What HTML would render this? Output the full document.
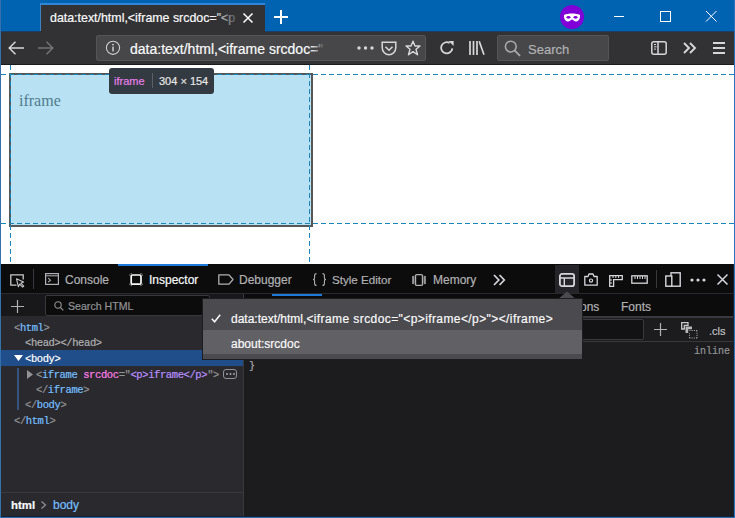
<!DOCTYPE html>
<html><head><meta charset="utf-8">
<style>
*{margin:0;padding:0;box-sizing:border-box}
html,body{width:735px;height:518px;overflow:hidden;background:#fff}
body{position:relative;font-family:"Liberation Sans",sans-serif;font-size:12px;-webkit-text-stroke:0.2px}
.a{position:absolute}
.mono{font-family:"Liberation Mono",monospace}
.mk div{white-space:pre;height:15.65px;position:absolute}
svg{position:absolute;overflow:visible}
</style></head><body>

<!-- title bar -->
<div class="a" style="left:0;top:0;width:735px;height:31px;background:#0063b1"></div>
<div class="a" style="left:40px;top:3px;width:225px;height:28px;background:#323234;border-top:2px solid #2f86d8;border-left:1px solid #3d82c4"></div>
<div class="a" style="left:50px;top:10px;width:190px;height:16px;color:#f9f9fa;white-space:nowrap;overflow:hidden;line-height:16px;font-size:12.4px">data:text/html,&lt;iframe srcdoc="&lt;p</div>
<div class="a" style="left:212px;top:5px;width:28px;height:26px;background:linear-gradient(to right,rgba(50,50,52,0),rgba(50,50,52,.75) 80%,#323234)"></div>
<svg style="left:243px;top:13px" width="10" height="10"><path d="M0.5 0.5L9.5 9.5M9.5 0.5L0.5 9.5" stroke="#f9f9fa" stroke-width="1.6"/></svg>
<svg style="left:274px;top:10px" width="14" height="14"><path d="M7 0V14M0 7H14" stroke="#fff" stroke-width="2"/></svg>
<div class="a" style="left:560px;top:5px;width:24px;height:24px;border-radius:50%;background:#8000d7"></div>
<svg style="left:563px;top:13px" width="18" height="10"><path d="M1 2C5 0 13 0 17 2C17.5 6 15 9 12.5 8.5C11 8.2 10 6.5 9 6.5C8 6.5 7 8.2 5.5 8.5C3 9 0.5 6 1 2Z" fill="#fff"/><ellipse cx="5.5" cy="4.3" rx="2" ry="1.4" fill="#8000d7"/><ellipse cx="12.5" cy="4.3" rx="2" ry="1.4" fill="#8000d7"/></svg>
<svg style="left:614px;top:16px" width="11" height="1"><path d="M0 0.5H10" stroke="#fff" stroke-width="1"/></svg>
<svg style="left:660px;top:11px" width="11" height="11"><rect x="0.5" y="0.5" width="10" height="10" fill="none" stroke="#fff" stroke-width="1"/></svg>
<svg style="left:706px;top:11px" width="11" height="11"><path d="M0 0L10.5 10.5M10.5 0L0 10.5" stroke="#fff" stroke-width="1"/></svg>

<!-- nav bar -->
<div class="a" style="left:0;top:31px;width:735px;height:34px;background:#323234;border-bottom:1px solid #1b1b1d"></div>
<div class="a" style="left:0;top:31px;width:40px;height:1px;background:#1a4068"></div>
<div class="a" style="left:265px;top:31px;width:470px;height:1px;background:#1a4068"></div>
<svg style="left:8px;top:41px" width="16" height="14"><path d="M1 7H16M7.5 0.8L1.2 7L7.5 13.2" stroke="#d7d7db" stroke-width="1.5" fill="none"/></svg>
<svg style="left:38px;top:41px" width="16" height="14"><path d="M0 7H15M8.5 0.8L14.8 7L8.5 13.2" stroke="#737375" stroke-width="1.5" fill="none"/></svg>
<div class="a" style="left:96px;top:35px;width:330px;height:26px;background:#474749;border:1px solid #545456;border-radius:2px"></div>
<svg style="left:105px;top:40px" width="16" height="16"><circle cx="8" cy="7.8" r="6.6" fill="none" stroke="#d0d0d3" stroke-width="1.1"/><rect x="7.25" y="6.6" width="1.5" height="4.8" fill="#d0d0d3"/><circle cx="8" cy="4.6" r="0.95" fill="#d0d0d3"/></svg>
<div class="a" style="left:130px;top:41px;width:222px;height:17px;color:#f9f9fa;white-space:nowrap;overflow:hidden;line-height:17px;font-size:14px">data:text/html,&lt;iframe srcdoc="</div>
<div class="a" style="left:310px;top:36px;width:44px;height:24px;background:linear-gradient(to right,rgba(71,71,73,0),rgba(71,71,73,.85) 30%,#474749 40%)"></div>
<svg style="left:357px;top:46px" width="17" height="4"><circle cx="2" cy="2" r="1.7" fill="#d7d7db"/><circle cx="8.5" cy="2" r="1.7" fill="#d7d7db"/><circle cx="15" cy="2" r="1.7" fill="#d7d7db"/></svg>
<svg style="left:381px;top:41px" width="16" height="15"><path d="M1.2 1.2H14.8V6.5C14.8 10.8 11.5 13.8 8 13.8C4.5 13.8 1.2 10.8 1.2 6.5Z" fill="none" stroke="#d7d7db" stroke-width="1.5"/><path d="M4.5 5.8L8 9.2L11.5 5.8" fill="none" stroke="#d7d7db" stroke-width="1.6"/></svg>
<svg style="left:405px;top:40px" width="16" height="16"><path d="M8 1.2L10 6H15L11 9.3L12.5 14.8L8 11.6L3.5 14.8L5 9.3L1 6H6Z" fill="none" stroke="#d7d7db" stroke-width="1.4" stroke-linejoin="round"/></svg>
<svg style="left:439px;top:40px" width="16" height="15"><path d="M13.3 8.3A5.6 5.6 0 1 1 10.6 3" fill="none" stroke="#d7d7db" stroke-width="1.8"/><path d="M9.6 1H14.6V6Z" fill="#d7d7db"/></svg>
<svg style="left:469px;top:41px" width="16" height="14"><path d="M1 0V14M4.5 0V14M8 0V14M10.2 0.3L15 13.7" stroke="#d7d7db" stroke-width="1.7"/></svg>
<div class="a" style="left:497px;top:35px;width:112px;height:26px;background:#474749;border:1px solid #545456;border-radius:2px"></div>
<svg style="left:504px;top:40px" width="18" height="17"><circle cx="6.8" cy="6.6" r="5.4" fill="none" stroke="#a8a8aa" stroke-width="1.6"/><path d="M10.6 10.4L16 15.8" stroke="#a8a8aa" stroke-width="1.9"/></svg>
<div class="a" style="left:528px;top:41px;color:#b1b1b3;line-height:17px;font-size:13px">Search</div>
<svg style="left:651px;top:41px" width="16" height="14"><rect x="0.8" y="0.8" width="14.4" height="12.4" rx="2" fill="none" stroke="#d7d7db" stroke-width="1.5"/><path d="M7 1V13" stroke="#d7d7db" stroke-width="1.5"/><path d="M3 3.5H5M3 5.8H5.5M3 8.1H5" stroke="#d7d7db" stroke-width="1"/></svg>
<svg style="left:683px;top:42px" width="14" height="12"><path d="M1 1L6 6L1 11M7 1L12 6L7 11" fill="none" stroke="#d7d7db" stroke-width="1.9"/></svg>
<svg style="left:713px;top:42px" width="12" height="12"><path d="M0 1H12M0 6H12M0 11H12" stroke="#d7d7db" stroke-width="1.8"/></svg>

<!-- content -->
<div class="a" style="left:1px;top:65px;width:733px;height:199px;background:#fff"></div>
<div class="a" style="left:9px;top:73px;width:304px;height:154px;background:#575757"></div>
<div class="a" style="left:11px;top:75px;width:300px;height:150px;background:#b8e2f3"></div>
<div class="a" style="left:19px;top:92px;font-family:'Liberation Serif',serif;font-size:16px;color:#517c8d;line-height:18px;-webkit-text-stroke:0">iframe</div>
<!-- guides -->
<div class="a" style="left:1px;top:74px;width:733px;height:1px;background:repeating-linear-gradient(to right,#1d86b8 0 5px,transparent 5px 8px)"></div>
<div class="a" style="left:1px;top:223px;width:733px;height:1px;background:repeating-linear-gradient(to right,#1d86b8 0 5px,transparent 5px 8px)"></div>
<div class="a" style="left:10px;top:65px;width:1px;height:199px;background:repeating-linear-gradient(to bottom,#1d86b8 0 5px,transparent 5px 8px)"></div>
<div class="a" style="left:309px;top:65px;width:1px;height:199px;background:repeating-linear-gradient(to bottom,#1d86b8 0 5px,transparent 5px 8px)"></div>
<!-- infobar -->
<div class="a" style="left:109px;top:68px;width:105px;height:26px;background:#343a41;border-radius:3px"></div>
<div class="a mono" style="left:114px;top:74px;color:#e57fea;font-size:11px;line-height:14px;font-family:'Liberation Sans',sans-serif">iframe</div>
<div class="a" style="left:152px;top:73px;width:1px;height:15px;background:#5b6068"></div>
<div class="a" style="left:159px;top:74px;color:#e6e6e6;font-size:11px;line-height:14px">304 × 154</div>

<!-- devtools toolbar -->
<div class="a" style="left:1px;top:264px;width:733px;height:29px;background:#0c0c0d"></div>
<div class="a" style="left:0;top:293px;width:735px;height:1px;background:#2a2a2e"></div>
<svg style="left:10px;top:274px" width="15" height="13"><path d="M6.5 11.2H0.8V0.8H13.2V5.5" fill="none" stroke="#c8c8ca" stroke-width="1.3"/><path d="M6.5 4.8L13.6 8L10.8 9.2L13.8 12.2L12.6 13.2L9.6 10.2L8.4 12.8Z" fill="none" stroke="#c8c8ca" stroke-width="1.1" stroke-linejoin="round"/></svg>
<div class="a" style="left:33px;top:269px;width:1px;height:20px;background:#38383d"></div>
<svg style="left:45px;top:273px" width="14" height="12"><rect x="0.6" y="0.6" width="12.8" height="10.8" fill="none" stroke="#b1b1b3" stroke-width="1.2"/><path d="M1 2.8H13" stroke="#b1b1b3" stroke-width="1"/><path d="M3.2 5.2L5.5 7.2L3.2 9.2" fill="none" stroke="#b1b1b3" stroke-width="1.1"/></svg>
<div class="a" style="left:65px;top:273px;color:#b1b1b3;line-height:14px">Console</div>
<div class="a" style="left:118px;top:264px;width:90px;height:2px;background:#1e7ada"></div>
<svg style="left:129px;top:273px" width="14" height="13"><rect x="2.2" y="2" width="9.8" height="9.2" rx="1.2" fill="none" stroke="#f9f9fa" stroke-width="1.7"/><path d="M0.3 2H1.3M12.9 2H13.9M0.3 11.2H1.3M12.9 11.2H13.9M2.2 0.1V1.1M12 0.1V1.1M2.2 12.1V13.1M12 12.1V13.1" stroke="#b0b0b2" stroke-width="1"/></svg>
<div class="a" style="left:149px;top:273px;color:#f9f9fa;line-height:14px">Inspector</div>
<svg style="left:218px;top:274px" width="16" height="11"><path d="M0.8 0.8H11L15 5.5L11 10.2H0.8Z" fill="none" stroke="#b1b1b3" stroke-width="1.3" stroke-linejoin="round"/></svg>
<div class="a" style="left:239px;top:273px;color:#b1b1b3;line-height:14px">Debugger</div>
<svg style="left:312px;top:273px" width="15" height="13"><path d="M4.5 0.6C2.8 0.6 2.6 1.2 2.6 2.6V5C2.6 6 2 6.5 1 6.5C2 6.5 2.6 7 2.6 8V10.4C2.6 11.8 2.8 12.4 4.5 12.4M10.5 0.6C12.2 0.6 12.4 1.2 12.4 2.6V5C12.4 6 13 6.5 14 6.5C13 6.5 12.4 7 12.4 8V10.4C12.4 11.8 12.2 12.4 10.5 12.4" fill="none" stroke="#b1b1b3" stroke-width="1.1"/></svg>
<div class="a" style="left:332px;top:273px;color:#b1b1b3;line-height:14px;font-size:11.6px">Style Editor</div>
<svg style="left:411px;top:274px" width="16" height="12"><rect x="4.6" y="0.6" width="6.8" height="10.8" rx="1" fill="none" stroke="#b1b1b3" stroke-width="1.2"/><path d="M3.5 2L1 3L3.5 4L1 5L3.5 6L1 7L3.5 8L1 9L3.5 10M12.5 2L15 3L12.5 4L15 5L12.5 6L15 7L12.5 8L15 9L12.5 10" fill="none" stroke="#b1b1b3" stroke-width="0.9"/></svg>
<div class="a" style="left:433px;top:273px;color:#b1b1b3;line-height:14px">Memory</div>
<svg style="left:493px;top:274px" width="13" height="12"><path d="M1 1L5.8 6L1 11M6.5 1L11.3 6L6.5 11" fill="none" stroke="#d7d7db" stroke-width="1.7"/></svg>
<div class="a" style="left:555px;top:265px;width:24px;height:28px;background:#252529"></div>
<svg style="left:559px;top:273px" width="16" height="14"><rect x="0.9" y="0.9" width="14.2" height="12.2" rx="2.2" fill="none" stroke="#d7d7db" stroke-width="1.8"/><path d="M1 5H15M5.3 5V13" stroke="#d7d7db" stroke-width="1.4"/></svg>
<svg style="left:584px;top:273px" width="14" height="13"><path d="M0.8 3.5H4L5 1H9L10 3.5H13.2V12.2H0.8Z" fill="none" stroke="#d7d7db" stroke-width="1.3" stroke-linejoin="round"/><circle cx="7" cy="7.6" r="1.6" fill="none" stroke="#d7d7db" stroke-width="1.2"/></svg>
<svg style="left:609px;top:275px" width="14" height="12"><path d="M0.7 11.3V0.7H13.3V4.6H4.6V11.3Z" fill="none" stroke="#d7d7db" stroke-width="1.3"/><path d="M4 1V3M6.8 1V3M9.6 1V3M1 5H3M1 8H3" stroke="#d7d7db" stroke-width="1"/></svg>
<svg style="left:631px;top:275px" width="17" height="9"><rect x="0.8" y="0.8" width="15.4" height="7.4" fill="none" stroke="#d7d7db" stroke-width="1.3"/><path d="M4 1V4M6.5 1V4M9 1V4M11.5 1V4M14 1V4" stroke="#d7d7db" stroke-width="1"/></svg>
<div class="a" style="left:656px;top:270px;width:1px;height:18px;background:#38383d"></div>
<svg style="left:665px;top:272px" width="16" height="15"><rect x="6" y="0.8" width="9.2" height="13.4" fill="none" stroke="#d7d7db" stroke-width="1.4"/><rect x="0.8" y="4" width="6" height="10.2" fill="#0c0c0d" stroke="#d7d7db" stroke-width="1.4"/></svg>
<svg style="left:690px;top:278px" width="16" height="4"><circle cx="2" cy="2" r="1.6" fill="#d7d7db"/><circle cx="8" cy="2" r="1.6" fill="#d7d7db"/><circle cx="14" cy="2" r="1.6" fill="#d7d7db"/></svg>
<svg style="left:717px;top:274px" width="11" height="11"><path d="M0.5 0.5L10.5 10.5M10.5 0.5L0.5 10.5" stroke="#d7d7db" stroke-width="1.5"/></svg>

<!-- markup panel -->
<div class="a" style="left:1px;top:294px;width:242px;height:223px;background:#2a2a2e"></div>
<div class="a" style="left:1px;top:294px;width:242px;height:23px;background:#18181a;border-bottom:1px solid #2a2a2e"></div>
<div class="a" style="left:243px;top:294px;width:1px;height:223px;background:#38383d"></div>
<svg style="left:11px;top:300px" width="13" height="13"><path d="M6.5 0V13M0 6.5H13" stroke="#b1b1b3" stroke-width="1.2"/></svg>
<div class="a" style="left:45px;top:295px;width:165px;height:21px;background:#0c0c0d;border:1px solid #38383d;border-radius:2px"></div>
<svg style="left:54px;top:301px" width="10" height="10"><circle cx="4" cy="4" r="3.2" fill="none" stroke="#939395" stroke-width="1.1"/><path d="M6.3 6.3L9.3 9.3" stroke="#939395" stroke-width="1.2"/></svg>
<div class="a" style="left:68px;top:299px;color:#939395;line-height:14px;font-size:10.6px">Search HTML</div>

<div class="a" style="left:1px;top:350px;width:242px;height:16px;background:#204e8a"></div>
<div class="a" style="left:17px;top:368px;width:2px;height:42px;background:#34557f"></div>
<div class="a mono mk" style="left:0;top:0;font-size:10.5px;letter-spacing:-0.4px;line-height:15.65px;color:#939395">
<div style="top:321px;left:14px"><span>&lt;</span><span style="color:#75bfff">html</span><span>&gt;</span></div>
<div style="top:336px;left:25px;color:#b1b1b3">&lt;head&gt;&lt;/head&gt;</div>
<div style="top:352px;left:25px;color:#fff">&lt;body&gt;</div>
<div style="top:368px;left:36px"><span>&lt;</span><span style="color:#75bfff">iframe</span> <span style="color:#ff7de9">srcdoc</span>="<span style="color:#b98eff">&lt;p&gt;iframe&lt;/p&gt;</span>"&gt;</div>
<div style="top:383px;left:36px"><span>&lt;/</span><span style="color:#75bfff">iframe</span><span>&gt;</span></div>
<div style="top:398px;left:25px"><span>&lt;/</span><span style="color:#75bfff">body</span><span>&gt;</span></div>
<div style="top:414px;left:14px"><span>&lt;/</span><span style="color:#75bfff">html</span><span>&gt;</span></div>
</div>
<svg style="left:14px;top:355px" width="9" height="6"><path d="M0 0H9L4.5 6Z" fill="#fff"/></svg>
<svg style="left:27px;top:370px" width="6" height="9"><path d="M0 0V9L6 4.5Z" fill="#939395"/></svg>
<div class="a" style="left:223px;top:369px;width:14px;height:10px;border:1px solid #939395;border-radius:3px"></div>
<svg style="left:226px;top:373px" width="9" height="2"><circle cx="1" cy="1" r="0.9" fill="#b1b1b3"/><circle cx="4.5" cy="1" r="0.9" fill="#b1b1b3"/><circle cx="8" cy="1" r="0.9" fill="#b1b1b3"/></svg>

<!-- breadcrumbs -->
<div class="a" style="left:1px;top:492px;width:242px;height:1px;background:#38383d"></div>
<div class="a" style="left:11px;top:498px;color:#f9f9fa;line-height:14px;font-size:11.4px;font-weight:bold">html</div>
<svg style="left:41px;top:501px" width="5" height="8"><path d="M0.5 0.5L4.5 4L0.5 7.5" fill="none" stroke="#939395" stroke-width="1.2"/></svg>
<div class="a" style="left:53px;top:498px;color:#75bfff;line-height:14px;font-size:12px">body</div>

<!-- rules panel -->
<div class="a" style="left:244px;top:294px;width:490px;height:223px;background:#1c1c1e"></div>
<div class="a" style="left:244px;top:294px;width:490px;height:23px;background:#0c0c0d;border-bottom:1px solid #38383d"></div>
<div class="a" style="left:272px;top:294px;width:50px;height:2px;background:#1e7ada"></div>
<div class="a" style="left:283px;top:300px;color:#f9f9fa;line-height:14px">Rules</div>
<div class="a" style="left:540px;top:300px;color:#b1b1b3;line-height:14px">Animations</div>
<div class="a" style="left:621px;top:300px;color:#b1b1b3;line-height:14px">Fonts</div>
<div class="a" style="left:244px;top:317px;width:490px;height:25px;background:#1c1c1e;border-top:1px solid #38383d;border-bottom:1px solid #38383d"></div>
<div class="a" style="left:250px;top:319px;width:394px;height:21px;background:#121214;border:1px solid #3a3a3e;border-radius:2px"></div>
<svg style="left:654px;top:323px" width="13" height="13"><path d="M6.5 0V13M0 6.5H13" stroke="#b1b1b3" stroke-width="1.2"/></svg>
<svg style="left:681px;top:322px" width="17" height="17"><path d="M0.7 7V0.7H7V3.3H3.3V7Z" fill="none" stroke="#c8c8ca" stroke-width="1.3"/><path d="M4.5 11V4.5H11V7.2H7.2V11Z" fill="#b8b8ba"/><path d="M8.5 8.5H16M16 8.5V16M16 16H8.5M8.5 16V11" fill="none" stroke="#b1b1b3" stroke-width="1" stroke-dasharray="1 1.2"/></svg>
<div class="a" style="left:709px;top:324px;color:#c0c0c2;line-height:14px;font-size:11px">.cls</div>
<div class="a mono" style="left:694px;top:345px;color:#939395;font-size:10px;line-height:14px">inline</div>
<div class="a mono" style="left:249px;top:360px;color:#b1b1b3;font-size:10px;line-height:14px">}</div>

<!-- popup -->
<svg style="left:557px;top:291px" width="20" height="10"><path d="M0 9L10 0.5L20 9Z" fill="#4a4a4f"/></svg>
<div class="a" style="left:202px;top:298px;width:381px;height:62px;background:#4a4a4f;border:1px solid #1d1d21"></div>
<div class="a" style="left:203px;top:330px;width:379px;height:24px;background:#606065"></div>
<svg style="left:211px;top:314px" width="10" height="9"><path d="M0.8 4.8L3.6 7.8L9.2 0.8" fill="none" stroke="#f9f9fa" stroke-width="1.5"/></svg>
<div class="a" style="left:231px;top:312px;color:#f9f9fa;line-height:14px">data:text/html,<span style="letter-spacing:0.41px">&lt;iframe srcdoc="&lt;p&gt;iframe&lt;/p&gt;"&gt;&lt;/iframe&gt;</span></div>
<div class="a" style="left:231px;top:337px;color:#f9f9fa;line-height:14px">about:srcdoc</div>

<!-- window border -->
<div class="a" style="left:733px;top:264px;width:1px;height:253px;background:#0f2238"></div>
<div class="a" style="left:1px;top:516px;width:733px;height:1px;background:#0f2238"></div>
<div class="a" style="left:0;top:0;width:1px;height:518px;background:#3570ab"></div>
<div class="a" style="left:734px;top:0;width:1px;height:518px;background:#2b72bd"></div>
<div class="a" style="left:0;top:517px;width:735px;height:1px;background:#2b6cb0"></div>
</body></html>
